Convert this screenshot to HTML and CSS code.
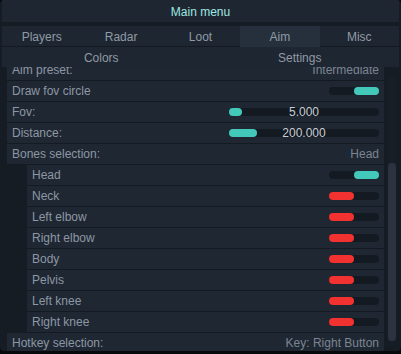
FILE: index.html
```html
<!DOCTYPE html>
<html lang="en">
<head>
  <meta charset="UTF-8">
  <title>Main menu</title>
  <link rel="stylesheet" href="styles.css">
</head>
<body>
  <div class="window">
    <div class="title">Main menu</div>
    <div class="tabs five">
      <div class="tab">Players</div>
      <div class="tab">Radar</div>
      <div class="tab">Loot</div>
      <div class="tab active">Aim</div>
      <div class="tab">Misc</div>
    </div>
    <div class="tabs two">
      <div class="tab">Colors</div>
      <div class="tab">Settings</div>
    </div>
    <div class="content">
      <div class="list">
        <div class="row"><span>Aim preset:</span><span class="value">Intermediate</span></div>
        <div class="row"><span>Draw fov circle</span><div class="toggle on"><div class="knob"></div></div></div>
        <div class="row"><span>Fov:</span><div class="slider"><div class="fill" style="width: 13px"></div><span class="num">5.000</span></div></div>
        <div class="row"><span>Distance:</span><div class="slider"><div class="fill" style="width: 28px"></div><span class="num">200.000</span></div></div>
        <div class="row"><span>Bones selection:</span><span class="value">Head</span></div>
        <div class="sub">
          <div class="row"><span>Head</span><div class="toggle on"><div class="knob"></div></div></div>
          <div class="row"><span>Neck</span><div class="toggle"><div class="knob"></div></div></div>
          <div class="row"><span>Left elbow</span><div class="toggle"><div class="knob"></div></div></div>
          <div class="row"><span>Right elbow</span><div class="toggle"><div class="knob"></div></div></div>
          <div class="row"><span>Body</span><div class="toggle"><div class="knob"></div></div></div>
          <div class="row"><span>Pelvis</span><div class="toggle"><div class="knob"></div></div></div>
          <div class="row"><span>Left knee</span><div class="toggle"><div class="knob"></div></div></div>
          <div class="row"><span>Right knee</span><div class="toggle"><div class="knob"></div></div></div>
        </div>
        <div class="row"><span>Hotkey selection:</span><span class="value">Key: Right Button</span></div>
      </div>
      <div class="scrollbar"><div class="thumb"></div></div>
    </div>
  </div>
</body>
</html>
```

FILE: styles.css
```css
body {
  margin: 0;
  background: #07090c;
  font-family: "Liberation Sans", Arial, sans-serif;
  font-size: 12px;
}

.window {
  width: 401px;
  height: 351px;
  background: #151c24;
  border-radius: 4px;
  overflow: hidden;
  display: flex;
  flex-direction: column;
}

.title {
  height: 22px;
  line-height: 24px;
  text-align: center;
  color: #9fe6e2;
  background: #1e2631;
  margin: 0 2px;
  flex: none;
}

.tabs {
  display: grid;
  height: 20px;
  background: #1e2631;
  margin: 0 2px;
  flex: none;
}

.tabs.five {
  margin-top: 4px;
  grid-template-columns: repeat(5, 1fr);
  border-bottom: 1px solid #141a21;
}

.tabs.two {
  grid-template-columns: repeat(2, 1fr);
}

.tab {
  color: #909aa6;
  text-align: center;
  line-height: 22px;
}

.tab.active {
  background: #26303c;
}

.content {
  flex: 1;
  display: flex;
  overflow: hidden;
  padding-left: 7px;
}

.list {
  width: 377px;
  margin-top: -7px;
}

.row {
  height: 20px;
  border-bottom: 1px solid #141a21;
  background: #1f2733;
  display: flex;
  align-items: center;
  justify-content: space-between;
  padding: 0 5px;
  color: #8d97a3;
}

.sub {
  padding-left: 20px;
}

.sub .row {
  padding-left: 5px;
}

.value {
  color: #7b8591;
}

.toggle {
  width: 50px;
  height: 8px;
  border-radius: 4px;
  background: #131a22;
  display: flex;
}

.knob {
  width: 25px;
  height: 8px;
  border-radius: 4px;
  background: #f23131;
}

.toggle.on {
  justify-content: flex-end;
}

.toggle.on .knob {
  background: #42c9ba;
}

.slider {
  position: relative;
  width: 150px;
  height: 8px;
  border-radius: 4px;
  background: #131a22;
}

.fill {
  height: 8px;
  border-radius: 4px;
  background: #42c9ba;
}

.num {
  position: absolute;
  left: 0;
  right: 0;
  top: -4px;
  line-height: 16px;
  text-align: center;
  color: #c9cdd2;
}

.scrollbar {
  width: 8px;
  margin: 6px 0 5px 4px;
  border-radius: 4px;
  background: #171e27;
  display: flex;
  flex-direction: column;
  padding-top: 90px;
}

.thumb {
  flex: 1;
  margin-bottom: 5px;
  border-radius: 4px;
  background: #2b3440;
}
```
